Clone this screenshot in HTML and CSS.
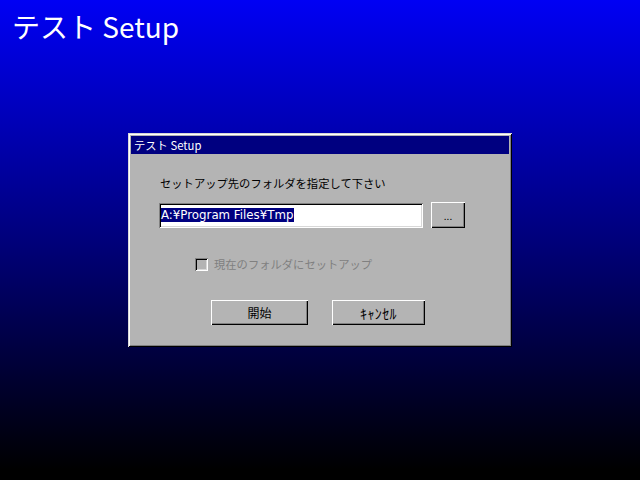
FILE: index.html
```html
<!DOCTYPE html>
<html lang="ja">
<head>
<meta charset="utf-8">
<link rel="stylesheet" href="styles.css">
</head>
<body>
<div class="screen">
  <h1 class="app-title">テスト Setup</h1>
  <div class="dialog">
    <div class="titlebar">テスト Setup</div>
    <div class="dialog-body">
      <div class="label">セットアップ先のフォルダを指定して下さい</div>
      <div class="path-row">
        <div class="textbox"><span class="sel">A:¥Program Files¥Tmp</span></div>
        <div class="btn btn-browse">...</div>
      </div>
      <div class="check-row">
        <span class="checkbox"></span>
        <span class="check-label">現在のフォルダにセットアップ</span>
      </div>
      <div class="button-row">
        <div class="btn btn-start">開始</div>
        <div class="btn btn-cancel">ｷｬﾝｾﾙ</div>
      </div>
    </div>
  </div>
</div>
</body>
</html>
```

FILE: styles.css
```css
html, body {
  margin: 0;
  padding: 0;
}
body {
  width: 640px;
  height: 480px;
  overflow: hidden;
  font-family: "Noto Sans CJK JP", "Noto Sans", sans-serif;
}
.screen {
  width: 640px;
  height: 480px;
  display: grid;
  grid-template: 1fr / 1fr;
  background: linear-gradient(to bottom, #0000f4 0px, #000080 230px, #000000 470px);
}
.app-title {
  grid-area: 1 / 1;
  align-self: start;
  justify-self: start;
  margin: 0;
  padding: 8px 0 0 12px;
  font-size: 28px;
  line-height: 36px;
  font-weight: normal;
  color: #ffffff;
  letter-spacing: 0;
}
.dialog {
  grid-area: 1 / 1;
  align-self: center;
  justify-self: center;
  width: 384px;
  height: 214px;
  box-sizing: border-box;
  background: #b4b4b4;
  padding: 3px;
  box-shadow: inset 1px 1px 0 #d8d8d8, inset -1px -1px 0 #000000,
              inset 2px 2px 0 #ffffff, inset -2px -2px 0 #808080;
  display: flex;
  flex-direction: column;
}
.titlebar {
  height: 18px;
  background: #000080;
  color: #ffffff;
  font-size: 11.3px;
  line-height: 18px;
  padding-left: 3px;
}
.dialog-body {
  display: flex;
  flex-direction: column;
  font-size: 11.3px;
  color: #000000;
}
.label {
  margin: 22px 0 0 29px;
  line-height: 14px;
  height: 14px;
}
.path-row {
  display: flex;
  gap: 8px;
  margin: 13px 0 0 28px;
  align-items: flex-start;
}
.textbox {
  width: 264px;
  height: 25px;
  box-sizing: border-box;
  background: #ffffff;
  box-shadow: inset 1px 1px 0 #808080, inset -1px -1px 0 #ffffff,
              inset 2px 2px 0 #000000, inset -2px -2px 0 #d8d8d8;
  padding: 4px 0 0 2px;
  line-height: 14px;
}
.sel {
  background: #000080;
  color: #ffffff;
  display: inline-block;
  height: 14px;
  line-height: 14px;
  font-family: "DejaVu Sans", sans-serif;
  font-size: 11.8px;
  padding-right: 1px;
}
.btn {
  box-sizing: border-box;
  height: 25px;
  background: #b4b4b4;
  display: flex;
  align-items: center;
  justify-content: center;
  font-size: 12px;
  box-shadow: inset 1px 1px 0 #ffffff, inset -1px -1px 0 #000000,
              inset -2px -2px 0 #808080;
}
.btn-browse {
  width: 34px;
  height: 26px;
  margin-top: -1px;
  font-size: 10px;
}
.check-row {
  display: flex;
  align-items: center;
  gap: 6px;
  margin: 29px 0 0 64px;
  height: 14px;
}
.checkbox {
  width: 13px;
  height: 13px;
  box-sizing: border-box;
  background: #b4b4b4;
  box-shadow: inset 1px 1px 0 #808080, inset -1px -1px 0 #ffffff,
              inset 2px 2px 0 #000000, inset -2px -2px 0 #d8d8d8;
}
.check-label {
  color: #808080;
  line-height: 14px;
}
.button-row {
  display: flex;
  gap: 24px;
  margin: 29px 0 0 80px;
}
.btn-start {
  width: 97px;
}
.btn-cancel {
  width: 93px;
  font-size: 14px;
  letter-spacing: 0.4px;
}
```
